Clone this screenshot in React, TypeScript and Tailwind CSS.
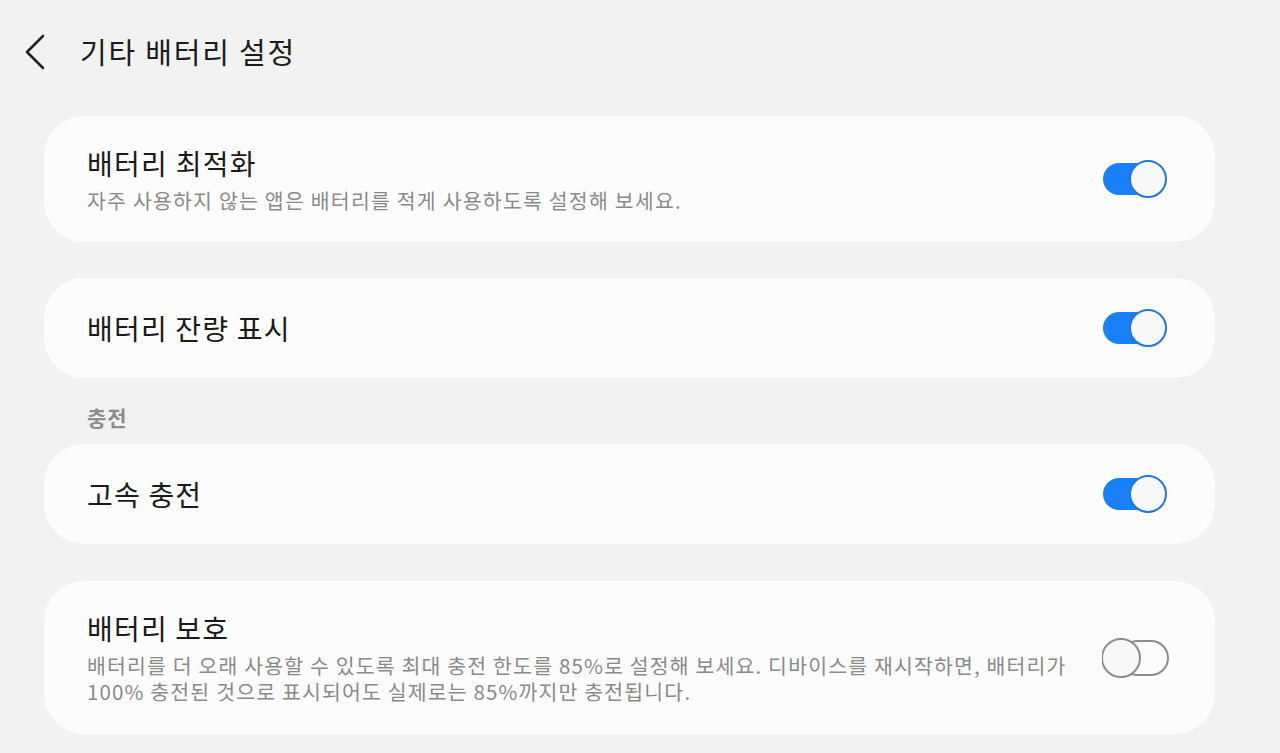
import React from "react";

const font = { fontFamily: '"Noto Sans CJK KR", "Noto Sans", sans-serif' };

function Toggle({ on }: { on: boolean }) {
  return (
    <svg width="68" height="42" viewBox="0 0 68 42" className="shrink-0">
      {on ? (
        <>
          <rect x="1" y="5" width="58" height="32" rx="16" fill="#1a80f8" />
          <circle cx="46" cy="21" r="18" fill="#f8f8f8" stroke="#2677d4" strokeWidth="2" />
        </>
      ) : (
        <>
          <rect x="19" y="4" width="47" height="34" rx="17" fill="none" stroke="#8c8c8c" strokeWidth="2" />
          <circle cx="19" cy="21" r="19" fill="#f8f8f8" stroke="#8c8c8c" strokeWidth="2" />
        </>
      )}
    </svg>
  );
}

export default function App() {
  return (
    <div className="w-[1280px] h-[753px] bg-[#f2f2f2] overflow-hidden" style={font}>
      <div className="h-[104px] flex items-center">
        <svg width="80" height="104" viewBox="0 0 80 104" className="shrink-0">
          <path d="M43 36 L27 52 L43 68" fill="none" stroke="#222222" strokeWidth="2.6" strokeLinecap="round" strokeLinejoin="round" />
        </svg>
        <div className="text-[29px] leading-[40px] text-[#1c1c1c] tracking-[1.8px] -mt-[2px]">기타 배터리 설정</div>
      </div>

      <div className="ml-[44px] w-[1171px] flex flex-col mt-[12px]">
        <div className="h-[126px] rounded-[40px] bg-[#fcfcfc] flex items-center justify-between pl-[43px] pr-[45px]">
          <div className="flex flex-col">
            <div className="text-[28px] leading-[38px] text-[#1a1a1a] tracking-[1.3px]">배터리 최적화</div>
            <div className="text-[20.5px] leading-[28px] text-[#8a8a8a] tracking-[1.2px] mt-[4px]">자주 사용하지 않는 앱은 배터리를 적게 사용하도록 설정해 보세요.</div>
          </div>
          <Toggle on />
        </div>

        <div className="h-[100px] mt-[36px] rounded-[40px] bg-[#fcfcfc] flex items-center justify-between pl-[43px] pr-[45px]">
          <div className="text-[28px] leading-[38px] text-[#1a1a1a] tracking-[1.2px]">배터리 잔량 표시</div>
          <Toggle on />
        </div>

        <div className="h-[66px] pl-[43px] pt-[24px]">
          <div className="text-[21px] leading-[30px] font-bold text-[#8d8d8d] tracking-[1px]">충전</div>
        </div>

        <div className="h-[100px] rounded-[40px] bg-[#fcfcfc] flex items-center justify-between pl-[43px] pr-[45px]">
          <div className="text-[28px] leading-[38px] text-[#1a1a1a] tracking-[1.2px]">고속 충전</div>
          <Toggle on />
        </div>

        <div className="h-[153px] mt-[37px] rounded-[40px] bg-[#fcfcfc] flex items-center justify-between pl-[43px] pr-[45px]">
          <div className="flex flex-col -mt-[2px]">
            <div className="text-[28px] leading-[38px] text-[#1a1a1a] tracking-[1.2px]">배터리 보호</div>
            <div className="text-[20.5px] leading-[26px] text-[#8a8a8a] tracking-[1.15px] mt-[5px]">
              배터리를 더 오래 사용할 수 있도록 최대 충전 한도를 85%로 설정해 보세요. 디바이스를 재시작하면, 배터리가
              <br />
              100% 충전된 것으로 표시되어도 실제로는 85%까지만 충전됩니다.
            </div>
          </div>
          <Toggle on={false} />
        </div>
      </div>
    </div>
  );
}
